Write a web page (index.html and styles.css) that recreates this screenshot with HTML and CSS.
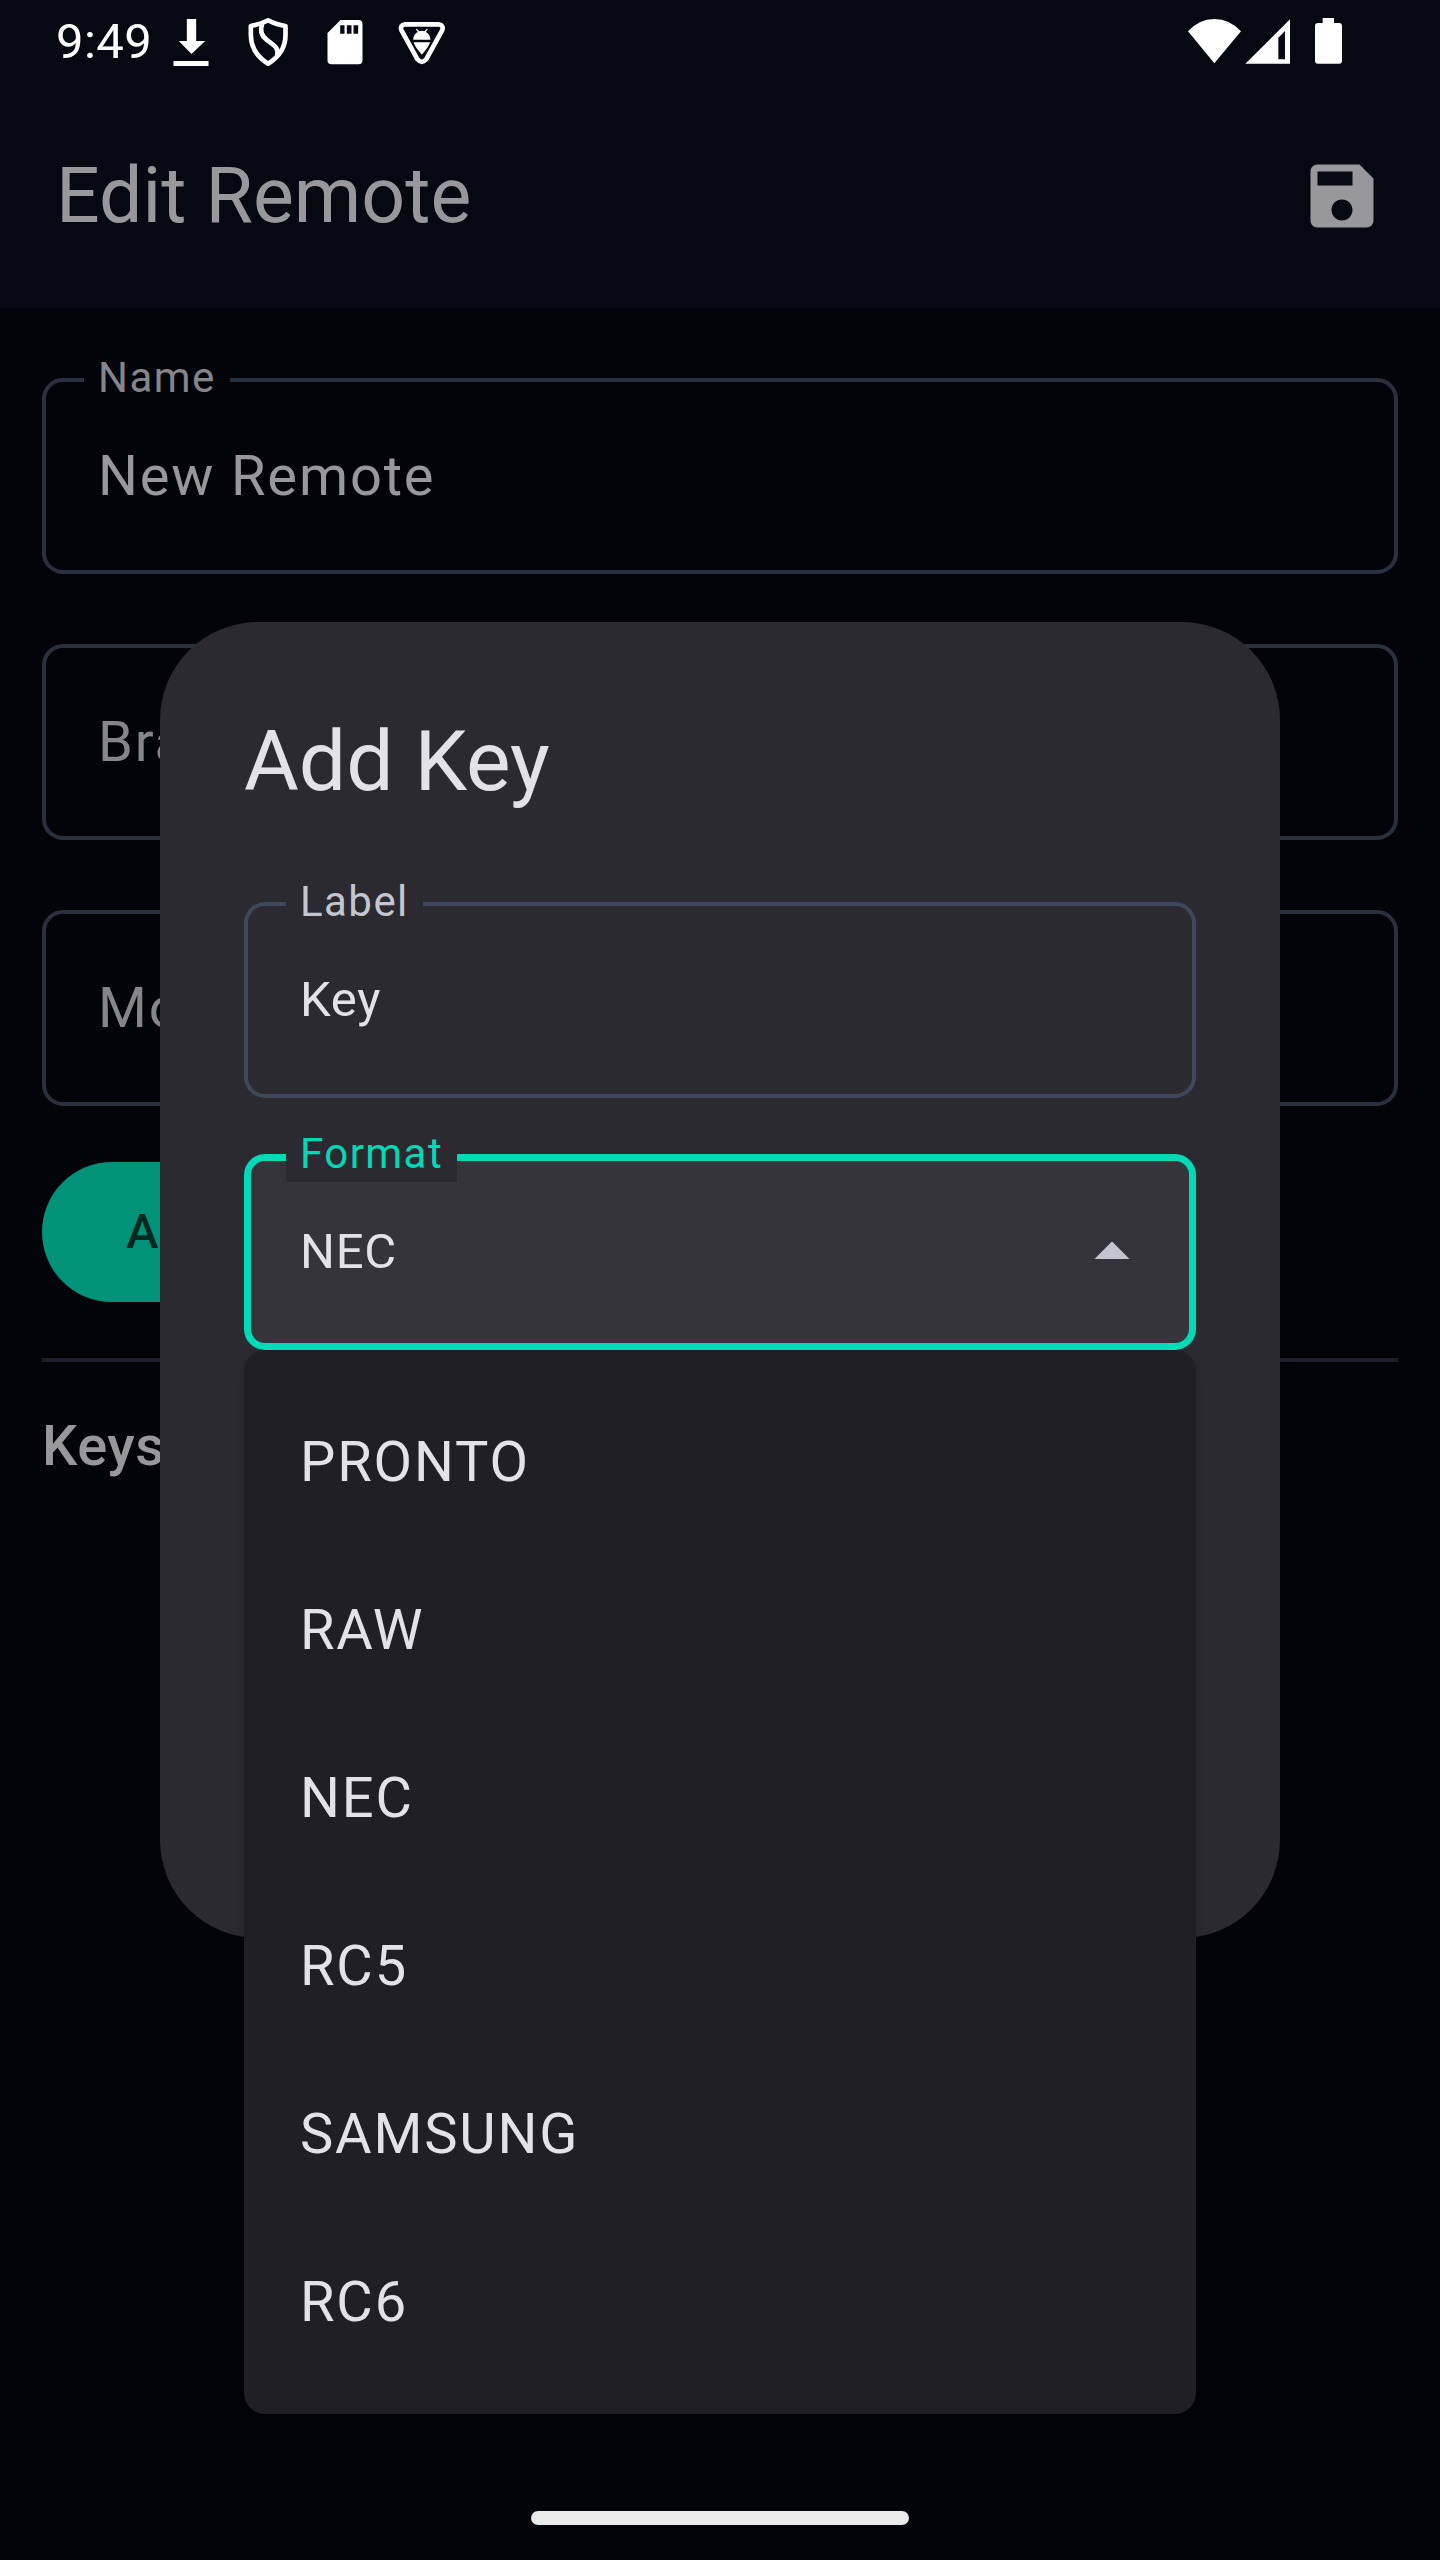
FILE: index.html
```html
<!DOCTYPE html>
<html lang="en">
<head>
<meta charset="utf-8">
<title>Edit Remote</title>
<link rel="stylesheet" href="styles.css">
</head>
<body>
<div class="screen">
  <header class="top">
    <div class="status">
      <span class="clock">9:49</span>
      <svg class="notif" viewBox="457.5 0 231 252"><path d="M559 57h28v66h27l-41 39-38-39h24zM519 183h105v15H519z"/></svg>
      <svg class="notif" viewBox="688.5 0 231 252"><g class="line"><path d="M803 61c-16 9-33 14-52 17v27c0 37 20 66 52 86 32-20 52-49 52-86V78c-19-3-36-8-52-17z"/><path d="M785 72c-8 20-3 34 13 47 20 16 38 22 32 48"/></g></svg>
      <svg class="notif" viewBox="919.5 0 231 252"><path fill-rule="evenodd" d="M1020 60h54q12 0 12 12v109q0 12-12 12h-81q-12 0-12-12V99zM1019 76v25h13V76zM1039 76v25h14V76zM1059 76v25h14V76z"/></svg>
      <svg class="notif" viewBox="1150.5 0 231 252"><path class="line" d="M1214 73h100q17 2 11 18l-48 87q-13 15-26 0l-48-87q-6-16 11-18z"/><path d="M1238 119c1-13 7-20 14-23l-6-8 3-2 7 8q8-3 16 0l7-8 3 2-6 8c7 3 13 10 14 23zM1239 127h50q-3 8-9 17l-16 20-16-20q-6-9-9-17z"/></svg>
      <span class="spacer"></span>
      <svg class="wifi" viewBox="81 0 168 252"><path d="M84 94Q117 57 163 57t80 37l-80 96z"/></svg>
      <svg class="signal" viewBox="249 0 150 252"><path fill-rule="evenodd" d="M390 58v133H256zM375 93l-20 20v65h20z"/></svg>
      <svg class="battery" viewBox="399 0 201 252"><path d="M488 54h34v15h15q9 0 9 9v104q0 9-9 9h-63q-9 0-9-9V78q0-9 9-9h14z"/></svg>
    </div>
    <div class="appbar">
      <h1 class="title">Edit Remote</h1>
      <svg class="save" viewBox="0 0 24 24"><path d="M17 3H5c-1.1 0-2 .9-2 2v14c0 1.1.9 2 2 2h14c1.1 0 2-.9 2-2V7l-4-4zm-5 16c-1.66 0-3-1.34-3-3s1.34-3 3-3 3 1.34 3 3-1.34 3-3 3zm3-10H5V5h10v4z"/></svg>
    </div>
  </header>
  <main class="form">
    <div class="field"><span class="float">Name</span><span class="value">New Remote</span></div>
    <div class="field"><span class="value hint">Brand</span></div>
    <div class="field"><span class="value hint">Model</span></div>
    <button class="add">Add Key</button>
    <hr class="rule">
    <h2 class="section">Keys</h2>
  </main>

  <section class="dialog">
    <h2 class="dialog-title">Add Key</h2>
    <div class="field"><span class="float">Label</span><span class="value">Key</span></div>
    <div class="field focused">
      <span class="float">Format</span><span class="value">NEC</span>
      <svg class="arrow" viewBox="0 0 24 24"><path d="M7 14l5-5 5 5z"/></svg>
    </div>
  </section>

  <ul class="menu">
    <li>PRONTO</li>
    <li>RAW</li>
    <li>NEC</li>
    <li>RC5</li>
    <li>SAMSUNG</li>
    <li>RC6</li>
  </ul>
  <div class="handle"></div>
</div>
</body>
</html>
```
FILE: styles.css
```css
* { box-sizing: border-box; }
body { margin: 0; background: #020409; font-family: Roboto, "Liberation Sans", sans-serif; }
.screen { position: relative; width: 1440px; height: 2560px; overflow: hidden; background: #020409; }
h1, h2, ul { margin: 0; padding: 0; font-weight: 400; }
ul { list-style: none; }

.top { height: 308px; background: #060912; }
.status { display: flex; align-items: center; height: 84px; padding: 0 80px 0 56px; fill: #fff; }
.clock { width: 96.5px; font-size: 49px; line-height: 56px; letter-spacing: .4px; color: #fff; white-space: nowrap; }
.notif { width: 77px; height: 84px; flex: none; }
.line { fill: none; stroke: #fff; stroke-width: 14; stroke-linejoin: round; }
.spacer { flex: 1; }
.wifi { width: 56px; height: 84px; }
.signal { width: 50px; height: 84px; }
.battery { width: 67px; height: 84px; }

.appbar { display: flex; align-items: center; justify-content: space-between; height: 224px; padding: 0 56px; }
.title { font-size: 77px; line-height: 98px; color: #98989c; }
.save { width: 84px; height: 84px; fill: #98989c; }

.form { display: flex; flex-direction: column; padding: 70px 42px 0; gap: 70px; }
.field { position: relative; display: flex; align-items: center; height: 196px; padding: 0 52px; border: 4px solid #2a303d; border-radius: 21px; }
.float { position: absolute; left: 38px; top: -32px; height: 56px; padding: 0 14px; font-size: 42px; line-height: 56px; letter-spacing: 1.45px; color: #86868a; background: #020409; }
.value { font-size: 56px; line-height: 84px; letter-spacing: 1.85px; color: #98989c; }
.hint { color: #86868a; }
.add { align-self: flex-start; height: 140px; margin-top: -14px; padding: 0 84px; border: 0; border-radius: 70px; background: #009379; color: #002920; font: 500 49px/70px Roboto, sans-serif; letter-spacing: .35px; }
.rule { width: 100%; height: 4px; margin: -14px 0; border: 0; background: #1c1f2b; }
.section { margin-top: -14px; font-size: 56px; line-height: 84px; font-weight: 500; letter-spacing: .5px; color: #98989c; }

.dialog { position: absolute; left: 160px; top: 622px; width: 1120px; height: 1316px; padding: 84px; border-radius: 98px; background: #2b2a30; display: flex; flex-direction: column; }
.dialog-title { margin-bottom: 84px; font-size: 84px; line-height: 112px; color: #e3e2e9; }
.dialog .field { margin-bottom: 56px; border-color: #3f485a; }
.dialog .float { color: #c4c6cf; background: #2b2a30; }
.dialog .value { font-size: 49px; line-height: 70px; letter-spacing: .7px; color: #e3e2e9; }
.dialog .focused { padding: 0 35px 0 49px; border: 7px solid #00dab6; background: #35343a; justify-content: space-between; }
.dialog .focused .float { left: 35px; top: -35px; color: #00dab6; }
.arrow { width: 84px; height: 84px; fill: #c4c6cf; }

.menu { position: absolute; left: 244px; top: 1350px; width: 952px; height: 1064px; padding: 28px 0; border-radius: 21px; background: #201f25; box-shadow: 0 6px 14px rgba(0, 0, 0, .2); clip-path: inset(0 -30px -30px -30px); }
.menu li { display: flex; align-items: center; height: 168px; padding: 0 56px; font-size: 56px; letter-spacing: 1.85px; color: #e3e2e9; }

.handle { position: absolute; left: 531px; top: 2511px; width: 378px; height: 14px; border-radius: 7px; background: #ebebeb; }
```
